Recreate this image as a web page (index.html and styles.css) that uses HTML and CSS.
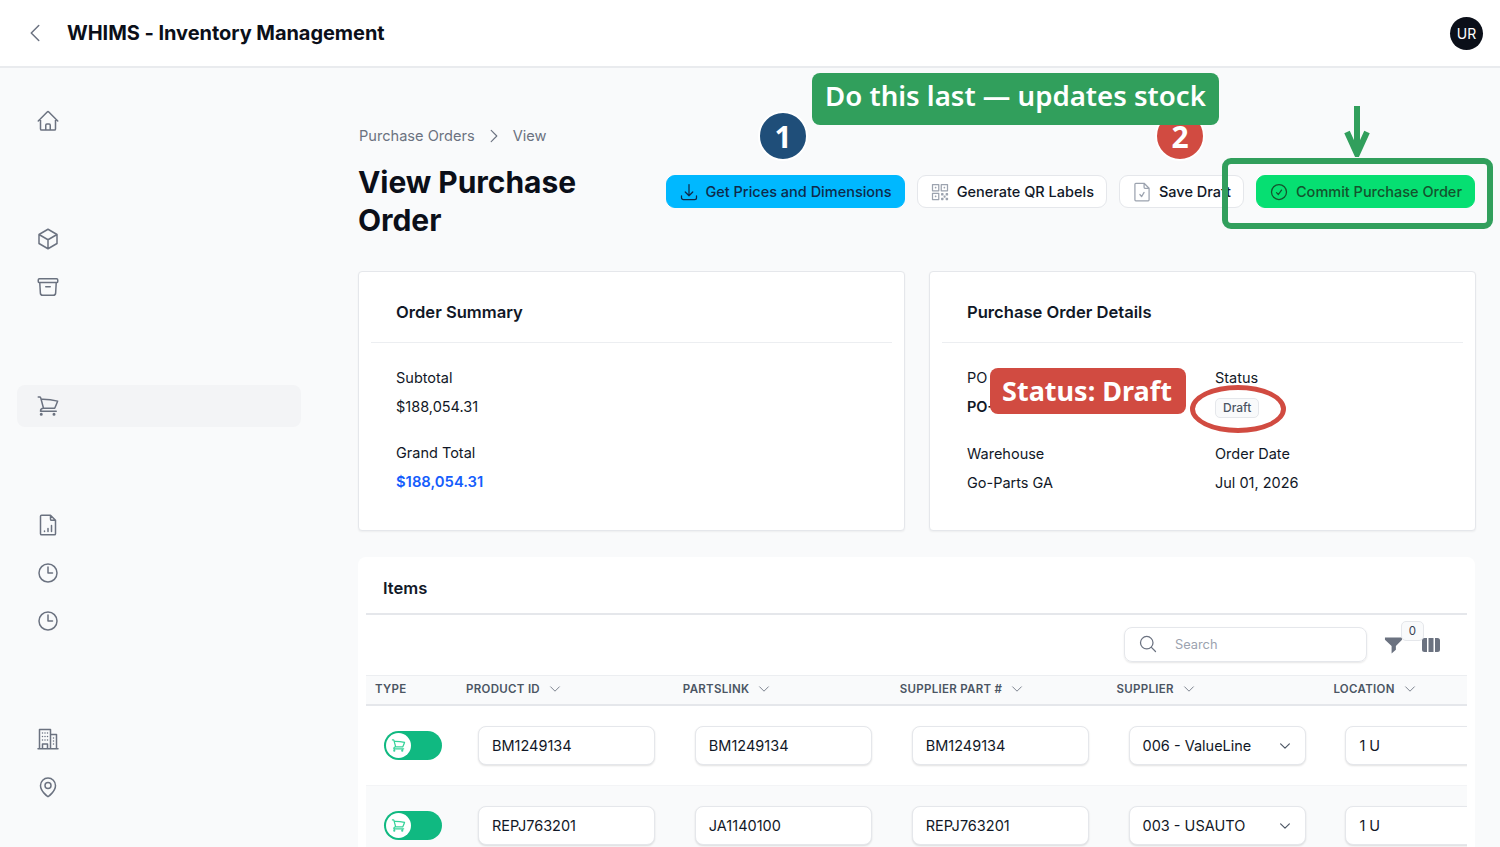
FILE: index.html
```html
<!DOCTYPE html>
<html lang="en">
<head>
  <meta charset="UTF-8" />
  <title>WHIMS - View Purchase Order</title>
  <link rel="stylesheet" href="styles.css">
</head>
<body>
  <svg class="sprite" xmlns="http://www.w3.org/2000/svg">
    <symbol id="i-home" viewBox="0 0 24 24"><path d="m2.25 12 8.954-8.955c.44-.439 1.152-.439 1.591 0L21.75 12M4.5 9.75v10.125c0 .621.504 1.125 1.125 1.125H9.75v-4.875c0-.621.504-1.125 1.125-1.125h2.25c.621 0 1.125.504 1.125 1.125V21h4.125c.621 0 1.125-.504 1.125-1.125V9.75M8.25 21h8.25"/></symbol>
    <symbol id="i-cube" viewBox="0 0 24 24"><path d="m21 7.5-9-5.25L3 7.5m18 0-9 5.25m9-5.25v9l-9 5.25M3 7.5l9 5.25M3 7.5v9l9 5.25m0-9v9"/></symbol>
    <symbol id="i-archive" viewBox="0 0 24 24"><path d="m20.25 7.5-.625 10.632a2.25 2.25 0 0 1-2.247 2.118H6.622a2.25 2.25 0 0 1-2.247-2.118L3.75 7.5m6 4.125h4.5M3.375 7.5h17.25c.621 0 1.125-.504 1.125-1.125v-1.5c0-.621-.504-1.125-1.125-1.125H3.375c-.621 0-1.125.504-1.125 1.125v1.5c0 .621.504 1.125 1.125 1.125Z"/></symbol>
    <symbol id="i-cart" viewBox="0 0 24 24"><path d="M2.25 3h1.386c.51 0 .955.343 1.087.835l.383 1.437M7.5 14.25a3 3 0 0 0-3 3h15.75m-12.75-3h11.218c1.121-2.3 2.1-4.684 2.924-7.138a60.114 60.114 0 0 0-16.536-1.84M7.5 14.25 5.106 5.272M6 20.25a.75.75 0 1 1-1.5 0 .75.75 0 0 1 1.5 0Zm12.75 0a.75.75 0 1 1-1.5 0 .75.75 0 0 1 1.5 0Z"/></symbol>
    <symbol id="i-report" viewBox="0 0 24 24"><path d="M14.5 2.25H5.6c-.6 0-1.1.5-1.1 1.1v17.3c0 .6.5 1.1 1.1 1.1h12.8c.6 0 1.1-.5 1.1-1.1V7.25l-5-5Zm0 0v3.9c0 .6.5 1.1 1.1 1.1h3.9M8.5 18.5v-.5M12 18.500v-3M15.5 18.500v-6"/></symbol>
    <symbol id="i-clock" viewBox="0 0 24 24"><path d="M12 6v6h4.5m4.5 0a9 9 0 1 1-18 0 9 9 0 0 1 18 0Z"/></symbol>
    <symbol id="i-building" viewBox="0 0 24 24"><path d="M2 21.750h20M3.500 21.750V2.500h11v19.250M14.500 7.500h6v14.250M6.500 6h.01M9 6h.01M11.500 6h.01M6.500 9.500h.01M9 9.500h.01M11.500 9.500h.01M6.500 13h.01M9 13h.01M11.500 13h.01M6.500 21.750V17h5v4.750M17.500 11h.01M17.500 14h.01M17.500 17h.01"/></symbol>
    <symbol id="i-pin" viewBox="0 0 24 24"><path d="M15 10.500a3 3 0 1 1-6 0 3 3 0 0 1 6 0Z"/><path d="M19.500 10.500c0 6-7.500 11.250-7.500 11.250S4.500 16.500 4.500 10.500a7.500 7.500 0 1 1 15 0Z"/></symbol>
    <symbol id="i-tray" viewBox="0 0 24 24"><path d="M3 16.500v2.250A2.250 2.250 0 0 0 5.250 21h13.500A2.250 2.250 0 0 0 21 18.750V16.500M16.500 12 12 16.500m0 0L7.500 12m4.500 4.500V3"/></symbol>
    <symbol id="i-qr" viewBox="0 0 24 24"><path d="M3 3h7.500v7.500H3zM13.500 3H21v7.500h-7.500zM3 13.500h7.500V21H3zM6.500 6.500h.5v.5h-.5zM17 6.500h.5v.5H17zM6.500 17h.5v.5h-.5zM14 14h1.500v1.500H14zM19.500 14H21v1.500h-1.500zM14 19.500h1.500V21H14zM19.500 19.500H21V21h-1.500zM17 17h1v1h-1z"/></symbol>
    <symbol id="i-doc" viewBox="0 0 24 24"><path d="M14.500 1.500H4.600c-.6 0-1.100.5-1.100 1.100v18.800c0 .6.500 1.100 1.100 1.100h14.800c.6 0 1.100-.5 1.100-1.100V7.500l-6-6Zm0 0v4.900c0 .6.500 1.100 1.100 1.100h4.900M9.500 15l2 2.500 3-5"/></symbol>
    <symbol id="i-check" viewBox="0 0 24 24"><path d="M9 12.750 11.250 15 15 9.750M21 12a9 9 0 1 1-18 0 9 9 0 0 1 18 0Z"/></symbol>
    <symbol id="i-search" viewBox="0 0 24 24"><path d="m21 21-5.197-5.197m0 0A7.500 7.500 0 1 0 5.196 5.196a7.500 7.500 0 0 0 10.607 10.607Z"/></symbol>
    <symbol id="i-down" viewBox="0 0 24 24"><path d="m19.500 8.250-7.500 7.500-7.500-7.500"/></symbol>
    <symbol id="i-left" viewBox="0 0 24 24"><path d="M15.750 19.500 8.250 12l7.500-7.500"/></symbol>
    <symbol id="i-right" viewBox="0 0 24 24"><path d="m8.250 4.500 7.500 7.500-7.500 7.500"/></symbol>
  </svg>

  <header class="topbar">
    <button class="back-btn"><svg class="icon"><use href="#i-left"/></svg></button>
    <h1 class="app-title">WHIMS - Inventory Management</h1>
    <div class="avatar">UR</div>
  </header>

  <div class="layout">
    <nav class="sidebar">
      <div class="nav-group">
        <a class="nav-item"><svg class="icon"><use href="#i-home"/></svg></a>
      </div>
      <div class="nav-group tight">
        <a class="nav-item"><svg class="icon"><use href="#i-cube"/></svg></a>
        <a class="nav-item"><svg class="icon"><use href="#i-archive"/></svg></a>
      </div>
      <div class="nav-group">
        <a class="nav-item active"><svg class="icon"><use href="#i-cart"/></svg></a>
      </div>
      <div class="nav-group">
        <a class="nav-item"><svg class="icon"><use href="#i-report"/></svg></a>
        <a class="nav-item"><svg class="icon"><use href="#i-clock"/></svg></a>
        <a class="nav-item"><svg class="icon"><use href="#i-clock"/></svg></a>
      </div>
      <div class="nav-group tight">
        <a class="nav-item"><svg class="icon"><use href="#i-building"/></svg></a>
        <a class="nav-item"><svg class="icon"><use href="#i-pin"/></svg></a>
      </div>
    </nav>

    <main class="content">
      <div class="page-head">
        <div class="page-title-wrap">
          <div class="breadcrumb">
            <span>Purchase Orders</span>
            <svg class="icon"><use href="#i-right"/></svg>
            <span>View</span>
          </div>
          <h2 class="page-title">View Purchase Order</h2>
        </div>
        <div class="actions">
          <button class="btn btn-blue"><svg class="icon"><use href="#i-tray"/></svg>Get Prices and Dimensions</button>
          <button class="btn"><svg class="icon icon-light"><use href="#i-qr"/></svg>Generate QR Labels</button>
          <button class="btn"><svg class="icon icon-light"><use href="#i-doc"/></svg>Save Draft</button>
          <button class="btn btn-green"><svg class="icon"><use href="#i-check"/></svg>Commit Purchase Order</button>
        </div>
      </div>

      <div class="cards">
        <section class="card">
          <h3 class="card-title">Order Summary</h3>
          <div class="card-body">
            <div class="field">
              <div class="field-label">Subtotal</div>
              <div class="field-value">$188,054.31</div>
            </div>
            <div class="field">
              <div class="field-label">Grand Total</div>
              <div class="field-value total">$188,054.31</div>
            </div>
          </div>
        </section>
        <section class="card">
          <h3 class="card-title">Purchase Order Details</h3>
          <div class="card-body details">
            <div class="field">
              <div class="field-label">PO #</div>
              <div class="field-value strong">PO-1</div>
            </div>
            <div class="field">
              <div class="field-label">Status</div>
              <div class="field-value"><span class="badge">Draft</span></div>
            </div>
            <div class="field">
              <div class="field-label">Warehouse</div>
              <div class="field-value">Go-Parts GA</div>
            </div>
            <div class="field">
              <div class="field-label">Order Date</div>
              <div class="field-value">Jul 01, 2026</div>
            </div>
          </div>
        </section>
      </div>

      <section class="items">
        <h3 class="items-title">Items</h3>
        <div class="toolbar">
          <div class="search">
            <svg class="icon"><use href="#i-search"/></svg>
            <span>Search</span>
          </div>
          <div class="tool-icons">
            <svg class="funnel" viewBox="0 0 20 20"><path d="M1 2h18v2.500l-6.500 6.500v4L8 19v-8L1 4.500z"/></svg>
            <span class="count">0</span>
            <svg class="columns" viewBox="0 0 20 20"><path d="M3.500 3h2.500v14H3.500A2.500 2.500 0 0 1 1 14.500v-9A2.500 2.500 0 0 1 3.500 3zM7.500 3h5v14h-5zM14 3h2.500A2.500 2.500 0 0 1 19 5.500v9a2.500 2.500 0 0 1-2.500 2.500H14z"/></svg>
          </div>
        </div>
        <div class="table">
          <div class="row head">
            <div class="th">TYPE</div>
            <div class="th">PRODUCT ID <svg class="icon"><use href="#i-down"/></svg></div>
            <div class="th">PARTSLINK <svg class="icon"><use href="#i-down"/></svg></div>
            <div class="th">SUPPLIER PART # <svg class="icon"><use href="#i-down"/></svg></div>
            <div class="th">SUPPLIER <svg class="icon"><use href="#i-down"/></svg></div>
            <div class="th">LOCATION <svg class="icon"><use href="#i-down"/></svg></div>
          </div>
          <div class="row">
            <div class="td"><span class="toggle"><span class="knob"><svg class="icon"><use href="#i-cart"/></svg></span></span></div>
            <div class="td"><div class="input">BM1249134</div></div>
            <div class="td"><div class="input">BM1249134</div></div>
            <div class="td"><div class="input">BM1249134</div></div>
            <div class="td"><div class="input select">006 - ValueLine<svg class="icon"><use href="#i-down"/></svg></div></div>
            <div class="td"><div class="input">1 U</div></div>
          </div>
          <div class="row alt">
            <div class="td"><span class="toggle"><span class="knob"><svg class="icon"><use href="#i-cart"/></svg></span></span></div>
            <div class="td"><div class="input">REPJ763201</div></div>
            <div class="td"><div class="input">JA1140100</div></div>
            <div class="td"><div class="input">REPJ763201</div></div>
            <div class="td"><div class="input select">003 - USAUTO<svg class="icon"><use href="#i-down"/></svg></div></div>
            <div class="td"><div class="input">1 U</div></div>
          </div>
        </div>
      </section>
    </main>
  </div>

  <!-- annotations drawn over the screen -->
  <span class="step step-1">1</span>
  <span class="step step-2">2</span>
  <div class="note note-stock">Do this last — updates stock</div>
  <div class="note note-status">Status: Draft</div>
  <div class="box-commit"></div>
  <svg class="arrow-commit" viewBox="0 0 28 52"><path d="M14 1v46M4 27l10 22 10-22"/></svg>
  <div class="ring-status"></div>
</body>
</html>
```

FILE: styles.css
```css
* {
  box-sizing: border-box;
}

html, body {
  height: 100%;
}

body {
  margin: 0;
  overflow: hidden;
  font-family: Inter, 'Noto Sans', sans-serif;
  background: #f9fafb;
  color: #111827;
}

.sprite {
  display: none;
}

.icon {
  width: 24px;
  height: 24px;
  fill: none;
  stroke: currentColor;
  stroke-width: 1.5;
  stroke-linecap: round;
  stroke-linejoin: round;
  flex: none;
}

/* TOP BAR */
.topbar {
  display: flex;
  align-items: center;
  height: 68px;
  padding: 0 17px 0 23px;
  background: #fff;
  border-bottom: 2px solid #e9ebee;
}

.back-btn {
  display: flex;
  width: 24px;
  height: 24px;
  padding: 0;
  margin-right: 20px;
  border: none;
  background: none;
  color: #6b7280;
}

.app-title {
  margin: 0;
  flex: 1;
  font-size: 20px;
  font-weight: 700;
  letter-spacing: -0.05px;
  color: #0b0f19;
}

.avatar {
  display: flex;
  align-items: center;
  justify-content: center;
  width: 33px;
  height: 33px;
  border-radius: 50%;
  background: #0b0f19;
  color: #fff;
  font-size: 14px;
}

.layout {
  display: flex;
  height: calc(100% - 68px);
  overflow: hidden;
}

/* SIDEBAR */
.sidebar {
  width: 333px;
  flex: none;
  padding: 29px 32px 0 17px;
}

.nav-group {
  display: flex;
  flex-direction: column;
}

.nav-group + .nav-group {
  margin-top: 71px;
}

.nav-group.tight {
  margin-top: 70px;
}

.nav-item {
  display: flex;
  align-items: center;
  height: 48px;
  padding-left: 19px;
  color: #6b7280;
}

.nav-item.active {
  height: 42px;
  margin: 3px 0;
  background: #f3f4f6;
  border-radius: 8px;
}

/* MAIN */
.content {
  flex: 1;
  min-width: 0;
  padding: 57px 25px 0 25px;
}

.page-head {
  display: flex;
  justify-content: space-between;
  height: 146px;
  padding-left: 1px;
}

.breadcrumb {
  display: flex;
  align-items: center;
  gap: 10px;
  height: 20px;
  margin-top: 1px;
  font-size: 14.6px;
  color: #6b7280;
}

.breadcrumb .icon {
  width: 18px;
  height: 18px;
}

.page-title {
  width: 260px;
  margin: 17px 0 0 -1px;
  font-size: 30px;
  line-height: 38px;
  font-weight: 700;
  letter-spacing: -0.05px;
  color: #0b0f19;
}

.actions {
  display: flex;
  align-items: flex-start;
  gap: 12px;
  padding-top: 50px;
}

.btn {
  display: flex;
  align-items: center;
  gap: 7px;
  height: 33px;
  padding: 0 12px;
  background: #fff;
  border: 1px solid #e5e7eb;
  border-radius: 9px;
  font-family: inherit;
  font-size: 14.5px;
  font-weight: 500;
  color: #111827;
  white-space: nowrap;
}

.btn .icon {
  width: 20px;
  height: 20px;
}

.icon-light {
  color: #9ca3af;
}

.btn-blue {
  gap: 6px;
  background: #00b8ff;
  border-color: #00b8ff;
  color: #0f2a4a;
}

.btn-green {
  background: #06df72;
  border-color: #06df72;
  color: #14532d;
}

/* CARDS */
.cards {
  display: grid;
  grid-template-columns: 547px 547px;
  gap: 24px;
}

.card {
  height: 260px;
  padding: 0 12px;
  background: #fff;
  border: 1px solid #e5e7eb;
  border-radius: 4px;
  box-shadow: 0 1px 2px rgba(0, 0, 0, 0.05);
}

.card-title {
  height: 71px;
  margin: 0;
  padding: 30px 25px 0;
  font-size: 16.6px;
  font-weight: 600;
  line-height: 20px;
  border-bottom: 1px solid #eceef1;
}

.card-body {
  padding: 25px 25px 0;
}

.card-body.details {
  display: grid;
  grid-template-columns: 248px 1fr;
  row-gap: 27px;
}

.field + .field {
  margin-top: 26px;
}

.details .field + .field {
  margin-top: 0;
}

.field-label {
  height: 20px;
  font-size: 14.5px;
  line-height: 20px;
}

.field-value {
  height: 20px;
  margin-top: 9px;
  font-size: 14.5px;
  line-height: 20px;
}

.field-value.total {
  font-size: 14.8px;
  font-weight: 600;
  color: #155dfc;
}

.field-value.strong {
  font-weight: 600;
}

.badge {
  display: inline-block;
  margin-top: 1px;
  padding: 0 7px;
  height: 20px;
  background: #f9fafb;
  border: 1px solid #e5e7eb;
  border-radius: 5px;
  font-size: 12px;
  line-height: 18px;
  font-weight: 500;
  color: #4b5563;
  vertical-align: top;
}

/* ITEMS */
.items {
  margin-top: 26px;
  padding: 0 8px;
  height: 400px;
  background: #fff;
  border-radius: 8px 8px 0 0;
}

.items-title {
  height: 58px;
  margin: 0;
  padding: 21px 17px 0;
  font-size: 16.6px;
  line-height: 20px;
  font-weight: 600;
  border-bottom: 2px solid #e5e7eb;
}

.toolbar {
  display: flex;
  justify-content: flex-end;
  height: 60px;
  padding: 12px 26px 0 0;
}

.search {
  display: flex;
  align-items: center;
  gap: 17px;
  width: 243px;
  height: 35px;
  padding: 0 13px 1px;
  border: 1px solid #e5e7eb;
  border-radius: 8px;
  box-shadow: 0 1px 2px rgba(0, 0, 0, 0.1);
  font-size: 12.8px;
  color: #9ca3af;
}

.search .icon {
  width: 20px;
  height: 20px;
  color: #6b7280;
}

.tool-icons {
  position: relative;
  display: flex;
  align-items: center;
  gap: 18px;
  height: 35px;
  margin-left: 17px;
}

.funnel, .columns {
  fill: #6b7280;
  flex: none;
}

.funnel {
  width: 19px;
  height: 20px;
}

.columns {
  width: 20px;
  height: 20px;
}

.count {
  position: absolute;
  top: -6px;
  left: 17px;
  width: 23px;
  height: 20px;
  background: #f9fafb;
  border: 1px solid #e5e7eb;
  border-radius: 5px;
  text-align: center;
  font-size: 11.5px;
  line-height: 18px;
  color: #374151;
}

.table {
  overflow: hidden;
}

.row {
  display: grid;
  grid-template-columns: 91px repeat(5, 216.85px);
  height: 80px;
  border-bottom: 1px solid #f3f4f6;
}

.row.head {
  height: 31px;
  padding-bottom: 2px;
  background: #f9fafb;
  border-top: 1px solid #eceef1;
  border-bottom: 2px solid #e5e7eb;
}

.row.alt {
  background: #f9fafb;
}

.th {
  display: flex;
  align-items: center;
  gap: 5px;
  padding-left: 9px;
  font-size: 11.5px;
  font-weight: 600;
  letter-spacing: 0.3px;
  color: #4b5563;
}

.th .icon {
  width: 14px;
  height: 14px;
  margin-left: 3px;
  color: #6b7280;
}

.td {
  display: flex;
  align-items: center;
  padding-left: 21px;
}

.td:first-child {
  padding-left: 18px;
}

.input {
  display: flex;
  align-items: center;
  justify-content: space-between;
  width: 177px;
  height: 39px;
  flex: none;
  padding: 0 13px;
  background: #fff;
  border: 1px solid #e5e7eb;
  border-radius: 8px;
  box-shadow: 0 1px 2px rgba(0, 0, 0, 0.12);
  font-size: 14.5px;
  color: #111827;
}

.select .icon {
  width: 14px;
  height: 14px;
  color: #4b5563;
  stroke-width: 2;
}

.toggle {
  display: flex;
  align-items: center;
  width: 58px;
  height: 29px;
  padding-left: 2px;
  background: #10b981;
  border-radius: 15px;
}

.knob {
  display: flex;
  align-items: center;
  justify-content: center;
  width: 25px;
  height: 25px;
  background: #fff;
  border-radius: 50%;
  color: #34d399;
}

.knob .icon {
  width: 15px;
  height: 15px;
  stroke-width: 2;
}

/* ANNOTATIONS */
.note {
  position: absolute;
  display: flex;
  align-items: center;
  justify-content: center;
  font-family: 'Noto Sans', sans-serif;
  font-weight: 600;
  color: #fff;
  border-radius: 8px;
  white-space: nowrap;
}

.note-stock {
  left: 812px;
  top: 73px;
  width: 407px;
  height: 52px;
  padding-bottom: 8px;
  background: #319f5c;
  font-size: 27.6px;
}

.note-status {
  left: 990px;
  top: 368px;
  width: 196px;
  height: 46px;
  padding: 0 2px 2px 0;
  background: #d14b41;
  font-size: 27px;
  font-weight: 700;
}

.step {
  position: absolute;
  top: 111px;
  display: flex;
  align-items: center;
  justify-content: center;
  width: 50px;
  height: 50px;
  border: 2px solid #fff;
  border-radius: 50%;
  font-family: 'Noto Sans', sans-serif;
  font-weight: 700;
  font-size: 30px;
  color: #fff;
}

.step-1 {
  left: 758px;
  background: #1f4e79;
}

.step-2 {
  left: 1155px;
  background: #d14b41;
}

.box-commit {
  position: absolute;
  left: 1222px;
  top: 158px;
  width: 271px;
  height: 71px;
  border: 6px solid #319f5c;
  border-radius: 9px;
}

.arrow-commit {
  position: absolute;
  left: 1343px;
  top: 105px;
  width: 28px;
  height: 52px;
  fill: none;
  stroke: #319f5c;
  stroke-width: 6;
}

.ring-status {
  position: absolute;
  left: 1190px;
  top: 385px;
  width: 96px;
  height: 48px;
  border: 5px solid #d14b41;
  border-radius: 50%;
}
```
